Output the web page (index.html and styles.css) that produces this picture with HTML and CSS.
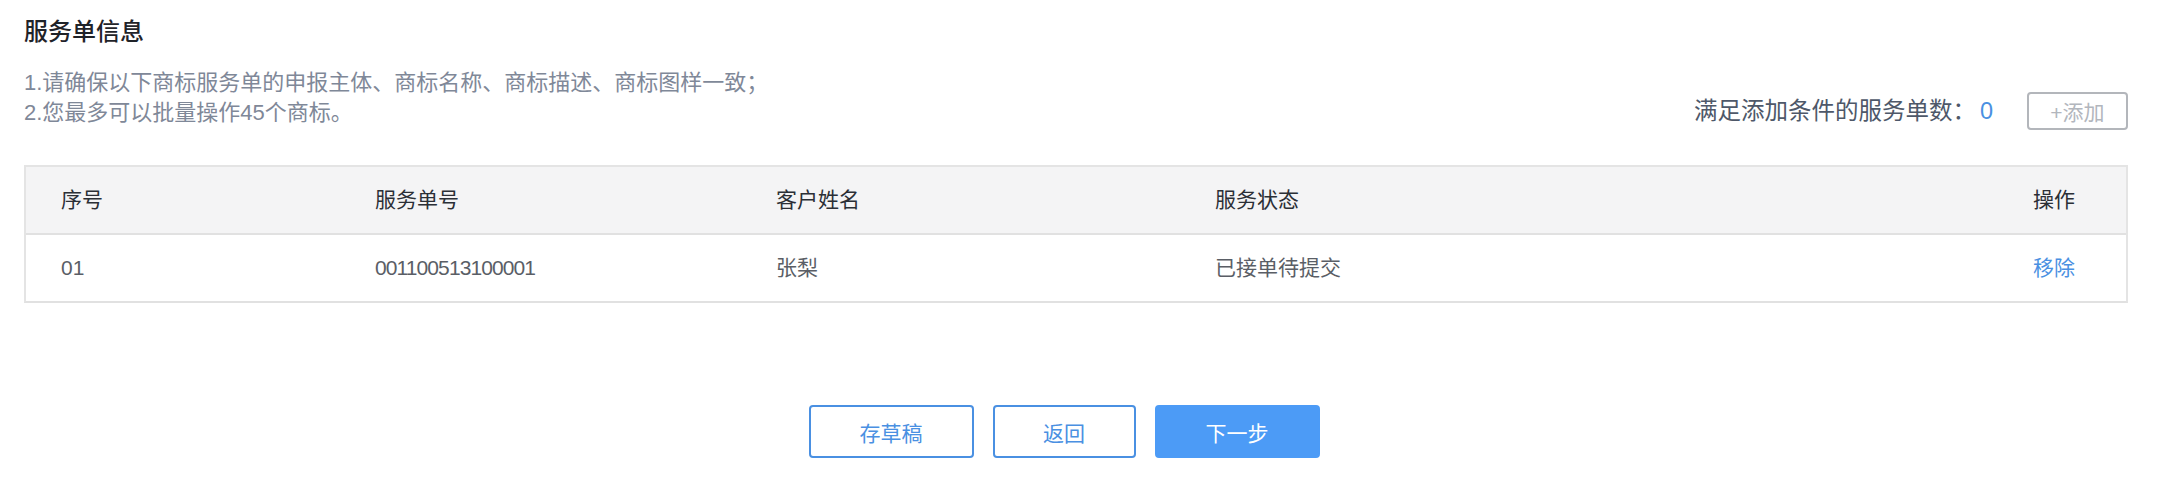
FILE: index.html
```html
<!DOCTYPE html>
<html lang="zh">
<head>
<meta charset="utf-8">
<title>服务单信息</title>
<link rel="stylesheet" href="styles.css">
</head>
<body>
<div class="page">
  <h2 class="title">服务单信息</h2>
  <div class="info-bar">
    <div class="notes">
      <p>1.请确保以下商标服务单的申报主体、商标名称、商标描述、商标图样一致；</p>
      <p>2.您最多可以批量操作45个商标。</p>
    </div>
    <div class="count-area">
      <span class="count-label">满足添加条件的服务单数：<span class="count-num">0</span></span>
      <button class="btn-add">+添加</button>
    </div>
  </div>
  <div class="table">
    <div class="row head">
      <div class="cell">序号</div>
      <div class="cell">服务单号</div>
      <div class="cell">客户姓名</div>
      <div class="cell">服务状态</div>
      <div class="cell op">操作</div>
    </div>
    <div class="row body">
      <div class="cell">01</div>
      <div class="cell num">001100513100001</div>
      <div class="cell">张梨</div>
      <div class="cell">已接单待提交</div>
      <div class="cell op"><a class="link">移除</a></div>
    </div>
  </div>
  <div class="actions">
    <button class="btn btn-outline">存草稿</button>
    <button class="btn btn-outline btn-narrow">返回</button>
    <button class="btn btn-primary">下一步</button>
  </div>
</div>
</body>
</html>
```
FILE: styles.css
```css
* { box-sizing: border-box; }
html, body { margin: 0; padding: 0; background: #ffffff; }
body {
  font-family: "Liberation Sans", "Noto Sans CJK SC", sans-serif;
  color: #333;
  width: 2160px;
  height: 484px;
  overflow: hidden;
}
.page {
  padding: 16px 32px 0 24px;
}
.title {
  margin: 0;
  font-size: 24px;
  line-height: 32px;
  font-weight: 500;
  color: #1f2329;
}
.info-bar {
  margin-top: 20px;
  display: flex;
  justify-content: space-between;
  align-items: flex-end;
}
.notes p {
  margin: 0;
  font-size: 22px;
  line-height: 30px;
  color: #7f8898;
}
.count-area {
  display: flex;
  align-items: center;
  margin-bottom: -2px;
}
.count-label {
  font-size: 23.5px;
  line-height: 30px;
  color: #4e5869;
}
.count-num {
  color: #4a90e2;
  margin-left: 4px;
}
.btn-add {
  margin-left: 34px;
  width: 101px;
  height: 38px;
  border: 2px solid #b3b6bb;
  border-radius: 4px;
  background: #fff;
  color: #b2b6bd;
  font-family: inherit;
  font-size: 21px;
  padding: 0;
}
.table {
  margin-top: 37px;
  border: 2px solid #e4e4e4;
  border-bottom: 2px solid #e1e1e1;
}
.row {
  display: grid;
  grid-template-columns: 314px 401px 439px 1fr 200px;
  align-items: center;
  font-size: 21px;
}
.row.head {
  height: 68px;
  background: #f4f4f5;
  color: #2b2f36;
  border-bottom: 2px solid #e1e1e1;
}
.row.body {
  height: 66px;
  color: #5a5e66;
}
.cell {
  padding-left: 35px;
  line-height: 28px;
}
.cell.num {
  letter-spacing: -0.9px;
}
.cell.op {
  text-align: right;
  padding-left: 0;
  padding-right: 51px;
}
.link {
  color: #4a90e2;
  cursor: pointer;
}
.actions {
  margin-top: 102px;
  display: flex;
  justify-content: center;
  gap: 19px;
  padding-right: 24px;
}
.btn {
  width: 165px;
  height: 53px;
  border-radius: 4px;
  font-family: inherit;
  font-size: 21px;
  padding: 0;
}
.btn-narrow { width: 143px; }
.btn-outline {
  background: #fff;
  border: 2px solid #4a90e2;
  color: #4a90e2;
}
.btn-primary {
  background: #4c9bf6;
  border: 2px solid #4c9bf6;
  color: #fff;
}
```
